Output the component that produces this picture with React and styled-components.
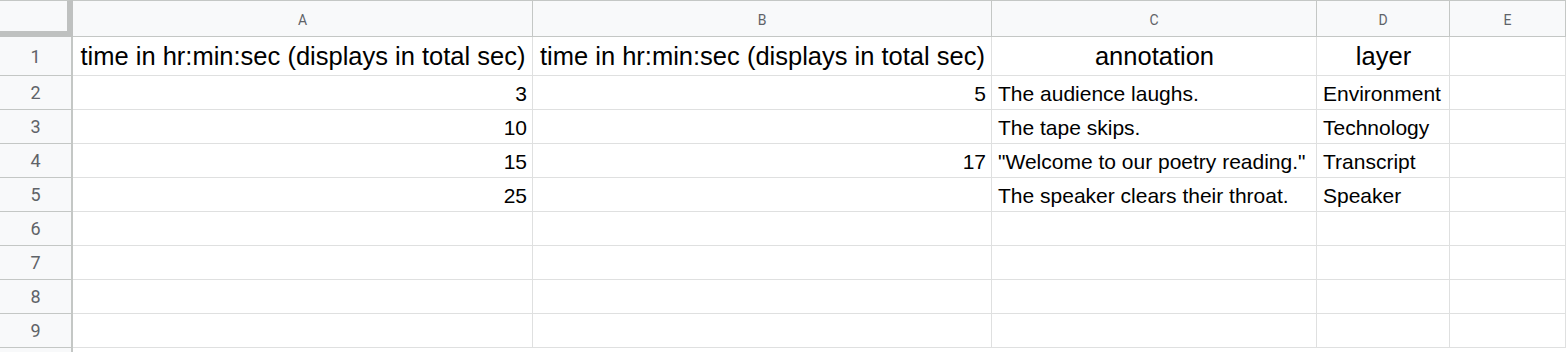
import styled, { createGlobalStyle } from "styled-components";

const GlobalStyle = createGlobalStyle`
  html, body {
    margin: 0;
    padding: 0;
    background: #ffffff;
    overflow: hidden;
  }
`;

const HEADER_LINE = "#c4c7c5";
const GRID_LINE = "#dfe0e0";

const columns = ["A", "B", "C", "D", "E"];

const HEADING = "time in hr:min:sec (displays in total sec)";

const rows = [
  { cells: [HEADING, HEADING, "annotation", "layer", ""], head: true },
  { cells: ["3", "5", "The audience laughs.", "Environment", ""] },
  { cells: ["10", "", "The tape skips.", "Technology", ""] },
  { cells: ["15", "17", "\"Welcome to our poetry reading.\"", "Transcript", ""] },
  { cells: ["25", "", "The speaker clears their throat.", "Speaker", ""] },
  { cells: ["", "", "", "", ""] },
  { cells: ["", "", "", "", ""] },
  { cells: ["", "", "", "", ""] },
  { cells: ["", "", "", "", ""] },
];

const Sheet = styled.div`
  display: grid;
  width: 1566px;
  grid-template-columns: 73px 460px 459px 325px 133px 1fr;
  grid-template-rows: 37px 39px repeat(9, 34px);
  font-family: "Liberation Sans", Arial, sans-serif;
  color: #000000;
`;

const Corner = styled.div`
  box-sizing: border-box;
  background: #f8f9fa;
  border-top: 1px solid ${HEADER_LINE};
  border-right: 6px solid #bfc1c0;
  border-bottom: 6px solid #bfc1c0;
`;

const ColHeader = styled.div`
  box-sizing: border-box;
  display: flex;
  align-items: center;
  justify-content: center;
  padding-top: 3px;
  background: #f8f9fa;
  border-top: 1px solid ${HEADER_LINE};
  border-right: 1px solid ${HEADER_LINE};
  border-bottom: 1px solid ${HEADER_LINE};
  font-family: Roboto, "Liberation Sans", sans-serif;
  font-size: 14px;
  color: #5f6368;
`;

const RowHeader = styled.div`
  box-sizing: border-box;
  display: flex;
  align-items: center;
  justify-content: center;
  background: #f8f9fa;
  border-right: 2px solid ${HEADER_LINE};
  border-bottom: 1px solid ${HEADER_LINE};
  font-family: Roboto, "Liberation Sans", sans-serif;
  font-size: 18px;
  color: #5f6368;
`;

const Cell = styled.div`
  box-sizing: border-box;
  display: flex;
  align-items: flex-end;
  justify-content: ${(p) =>
    p.$align === "right" ? "flex-end" : p.$align === "center" ? "center" : "flex-start"};
  padding: 0 5px ${(p) => (p.$head ? "4px" : "3px")} 6px;
  border-right: 1px solid ${GRID_LINE};
  border-bottom: 1px solid ${GRID_LINE};
  font-size: ${(p) => (p.$head ? "25.5px" : "21px")};
  white-space: nowrap;
  overflow: hidden;
`;

const alignFor = (value, head) => {
  if (head) return "center";
  if (value !== "" && !isNaN(Number(value))) return "right";
  return "left";
};

const Row = ({ index, row }) => (
  <>
    <RowHeader>{index}</RowHeader>
    {row.cells.map((value, j) => (
      <Cell key={j} $head={row.head} $align={alignFor(value, row.head)}>
        {value}
      </Cell>
    ))}
  </>
);

const App = () => {
  return (
    <>
      <GlobalStyle />
      <Sheet>
        <Corner />
        {columns.map((c) => (
          <ColHeader key={c}>{c}</ColHeader>
        ))}
        {rows.map((row, i) => (
          <Row key={i} index={i + 1} row={row} />
        ))}
        {/* row 10 only peeks in at the bottom edge */}
        <RowHeader />
      </Sheet>
    </>
  );
};

export default App;
